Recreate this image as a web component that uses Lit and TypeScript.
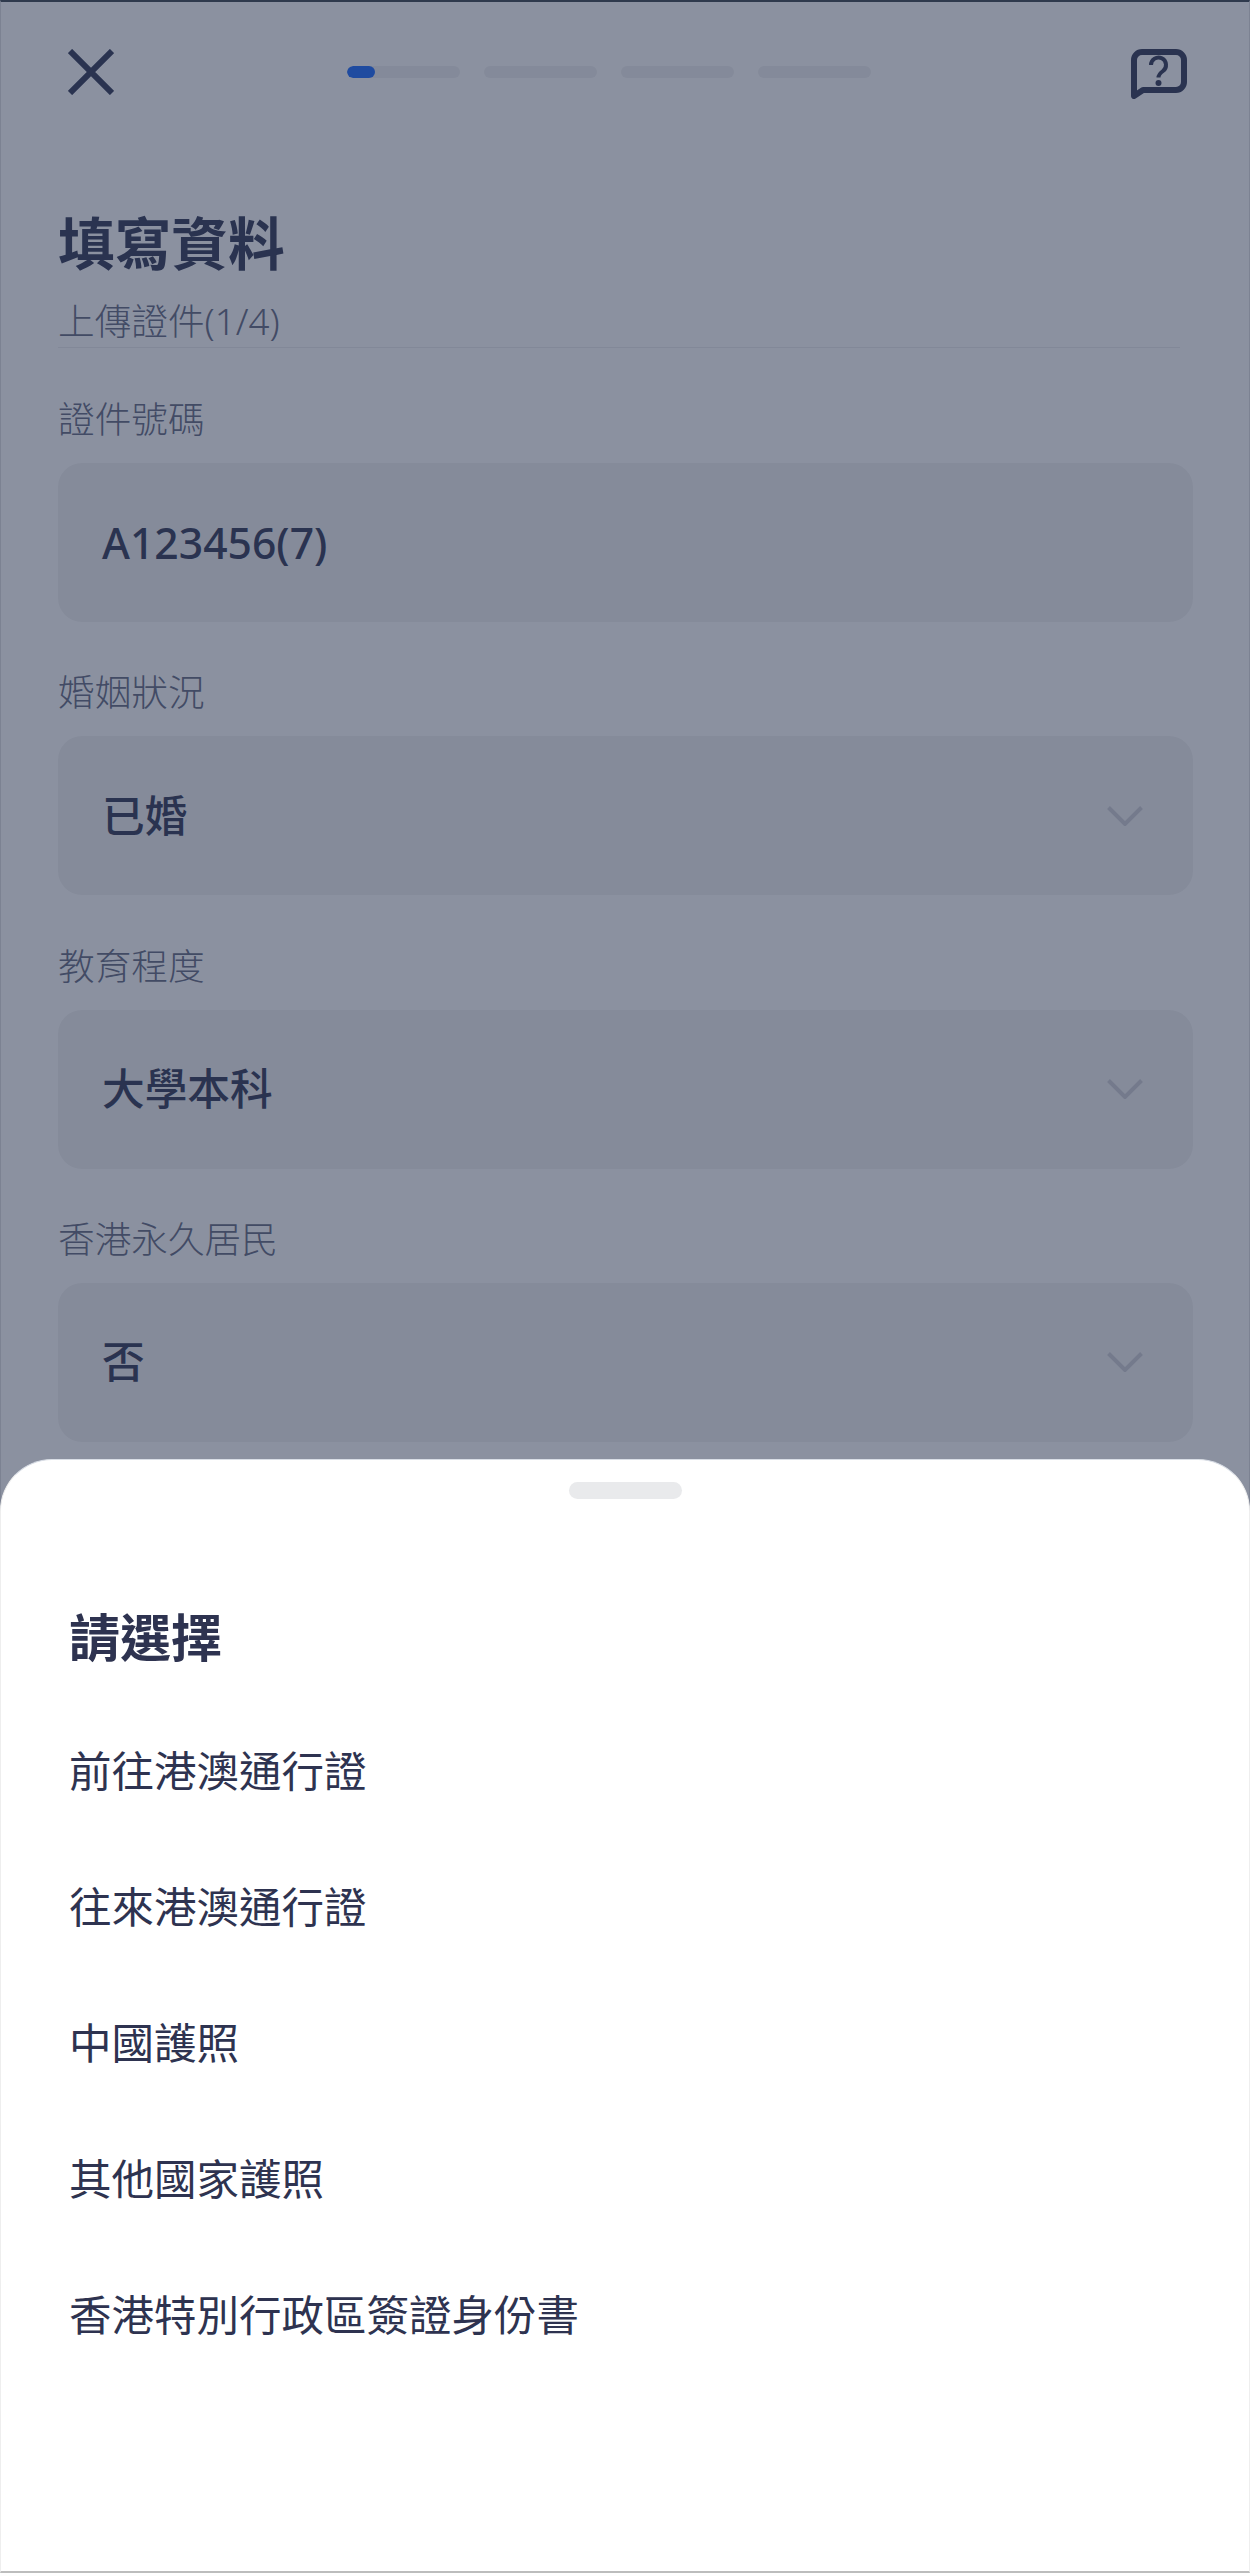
import { LitElement, html, css } from "lit";
import { customElement } from "lit/decorators.js";

const FIELDS = [
  { label: "證件號碼", value: "A123456(7)", select: false },
  { label: "婚姻狀況", value: "已婚", select: true },
  { label: "教育程度", value: "大學本科", select: true },
  { label: "香港永久居民", value: "否", select: true },
];

const OPTIONS = [
  "前往港澳通行證",
  "往來港澳通行證",
  "中國護照",
  "其他國家護照",
  "香港特別行政區簽證身份書",
];

@customElement("app-root")
export class AppRoot extends LitElement {
  static styles = css`
    :host {
      display: block;
      font-family: "Noto Sans", "Noto Sans CJK TC", sans-serif;
      color: #3d435f;
    }
    .page {
      position: relative;
      height: 2573px;
      overflow: hidden;
      background: #fff;
      box-sizing: border-box;
    }
    .scrim {
      position: absolute;
      inset: 0;
      background: rgba(23, 35, 65, 0.5);
      border-top: 2px solid #2f3a4d;
      border-left: 1px solid #7c8292;
      border-right: 1px solid #7c8292;
    }
    .header {
      display: flex;
      align-items: center;
      height: 144px;
      padding: 0 59px 0 68px;
    }
    .close {
      display: block;
      width: 46px;
      height: 46px;
    }
    .progress {
      display: flex;
      gap: 24px;
      margin-left: 233px;
    }
    .segment {
      width: 113px;
      height: 12px;
      border-radius: 6px;
      background: #f1f1f2;
      overflow: hidden;
    }
    .segment-fill {
      width: 28px;
      height: 100%;
      border-radius: 6px;
      background: #2773ff;
    }
    .help {
      display: block;
      margin: 4px 4px 0 auto;
      width: 56px;
      height: 50px;
    }
    .content {
      padding: 0 58px;
    }
    h1 {
      margin: 65px 0 0;
      font-size: 56.67px;
      line-height: 68px;
      font-weight: 700;
    }
    .subtitle {
      margin-top: 22px;
      font-size: 36.67px;
      line-height: 44px;
      font-weight: 300;
      color: #6d7289;
      padding-bottom: 4px;
      border-bottom: 1px solid #ececee;
      width: 1122px;
    }
    .fields {
      display: flex;
      flex-direction: column;
      gap: 48.33px;
      margin-top: 49px;
    }
    .label {
      font-size: 36.67px;
      line-height: 44px;
      font-weight: 300;
      color: #6d7289;
    }
    .field {
      display: flex;
      align-items: center;
      justify-content: space-between;
      box-sizing: border-box;
      width: 1135px;
      height: 159px;
      margin-top: 22px;
      padding: 0 50px 0 44px;
      border-radius: 24px;
      background: #f3f3f3;
      font-size: 42.67px;
      line-height: 60px;
      font-weight: 500;
    }
    .chevron {
      display: block;
      width: 36px;
      height: 20px;
    }
    .sheet {
      position: absolute;
      left: 0;
      right: 0;
      bottom: 0;
      height: 1114px;
      box-sizing: border-box;
      padding: 22px 68px 0;
      background: #fff;
      border-radius: 52px 52px 0 0;
      border-left: 1px solid #eeeeee;
      border-right: 1px solid #eeeeee;
      border-bottom: 2px solid #bdbdbd;
      border-top: 1px solid #d9dee6;
    }
    .handle {
      width: 113px;
      height: 17px;
      margin: 0 auto;
      border-radius: 9px;
      background: #e9eaec;
    }
    h2 {
      margin: 106px 0 0;
      font-size: 51px;
      line-height: 64px;
      font-weight: 700;
      color: #2e3350;
    }
    .options {
      margin-top: 34px;
    }
    .option {
      display: flex;
      align-items: center;
      height: 136px;
      font-size: 42.5px;
      line-height: 60px;
      font-weight: 400;
      color: #2e3350;
    }
  `;

  render() {
    return html`
      <div class="page">
        <div class="header">
          <svg class="close" viewBox="0 0 46 46" fill="none" stroke="#3d435f" stroke-width="6">
            <path d="M2 2 44 44M44 2 2 44" />
          </svg>
          <div class="progress">
            <div class="segment"><div class="segment-fill"></div></div>
            <div class="segment"></div>
            <div class="segment"></div>
            <div class="segment"></div>
          </div>
          <svg class="help" viewBox="0 0 56 50" fill="none" stroke="#3d435f" stroke-width="6">
            <path d="M3 47V11a8 8 0 0 1 8-8h34a8 8 0 0 1 8 8v22a8 8 0 0 1-8 8H12z" stroke-linejoin="round" />
            <path d="M20 16a7.5 7.5 0 1 1 12 6c-3 2.2-4.5 3.5-4.5 6.500" stroke-width="4" />
            <circle cx="27.5" cy="34" r="3" fill="#3d435f" stroke="none" />
          </svg>
        </div>
        <div class="content">
          <h1>填寫資料</h1>
          <div class="subtitle">上傳證件(1/4)</div>
          <div class="fields">
            ${FIELDS.map(
              (f) => html`
                <div>
                  <div class="label">${f.label}</div>
                  <div class="field">
                    <span>${f.value}</span>
                    ${f.select
                      ? html`<svg class="chevron" viewBox="0 0 36 20" fill="none" stroke="#d0d1d7" stroke-width="4">
                          <path d="M1.5 1.5 18 18 34.5 1.5" />
                        </svg>`
                      : ""}
                  </div>
                </div>
              `
            )}
          </div>
        </div>
        <div class="scrim"></div>
        <div class="sheet">
          <div class="handle"></div>
          <h2>請選擇</h2>
          <div class="options">
            ${OPTIONS.map((o) => html`<div class="option">${o}</div>`)}
          </div>
        </div>
      </div>
    `;
  }
}
